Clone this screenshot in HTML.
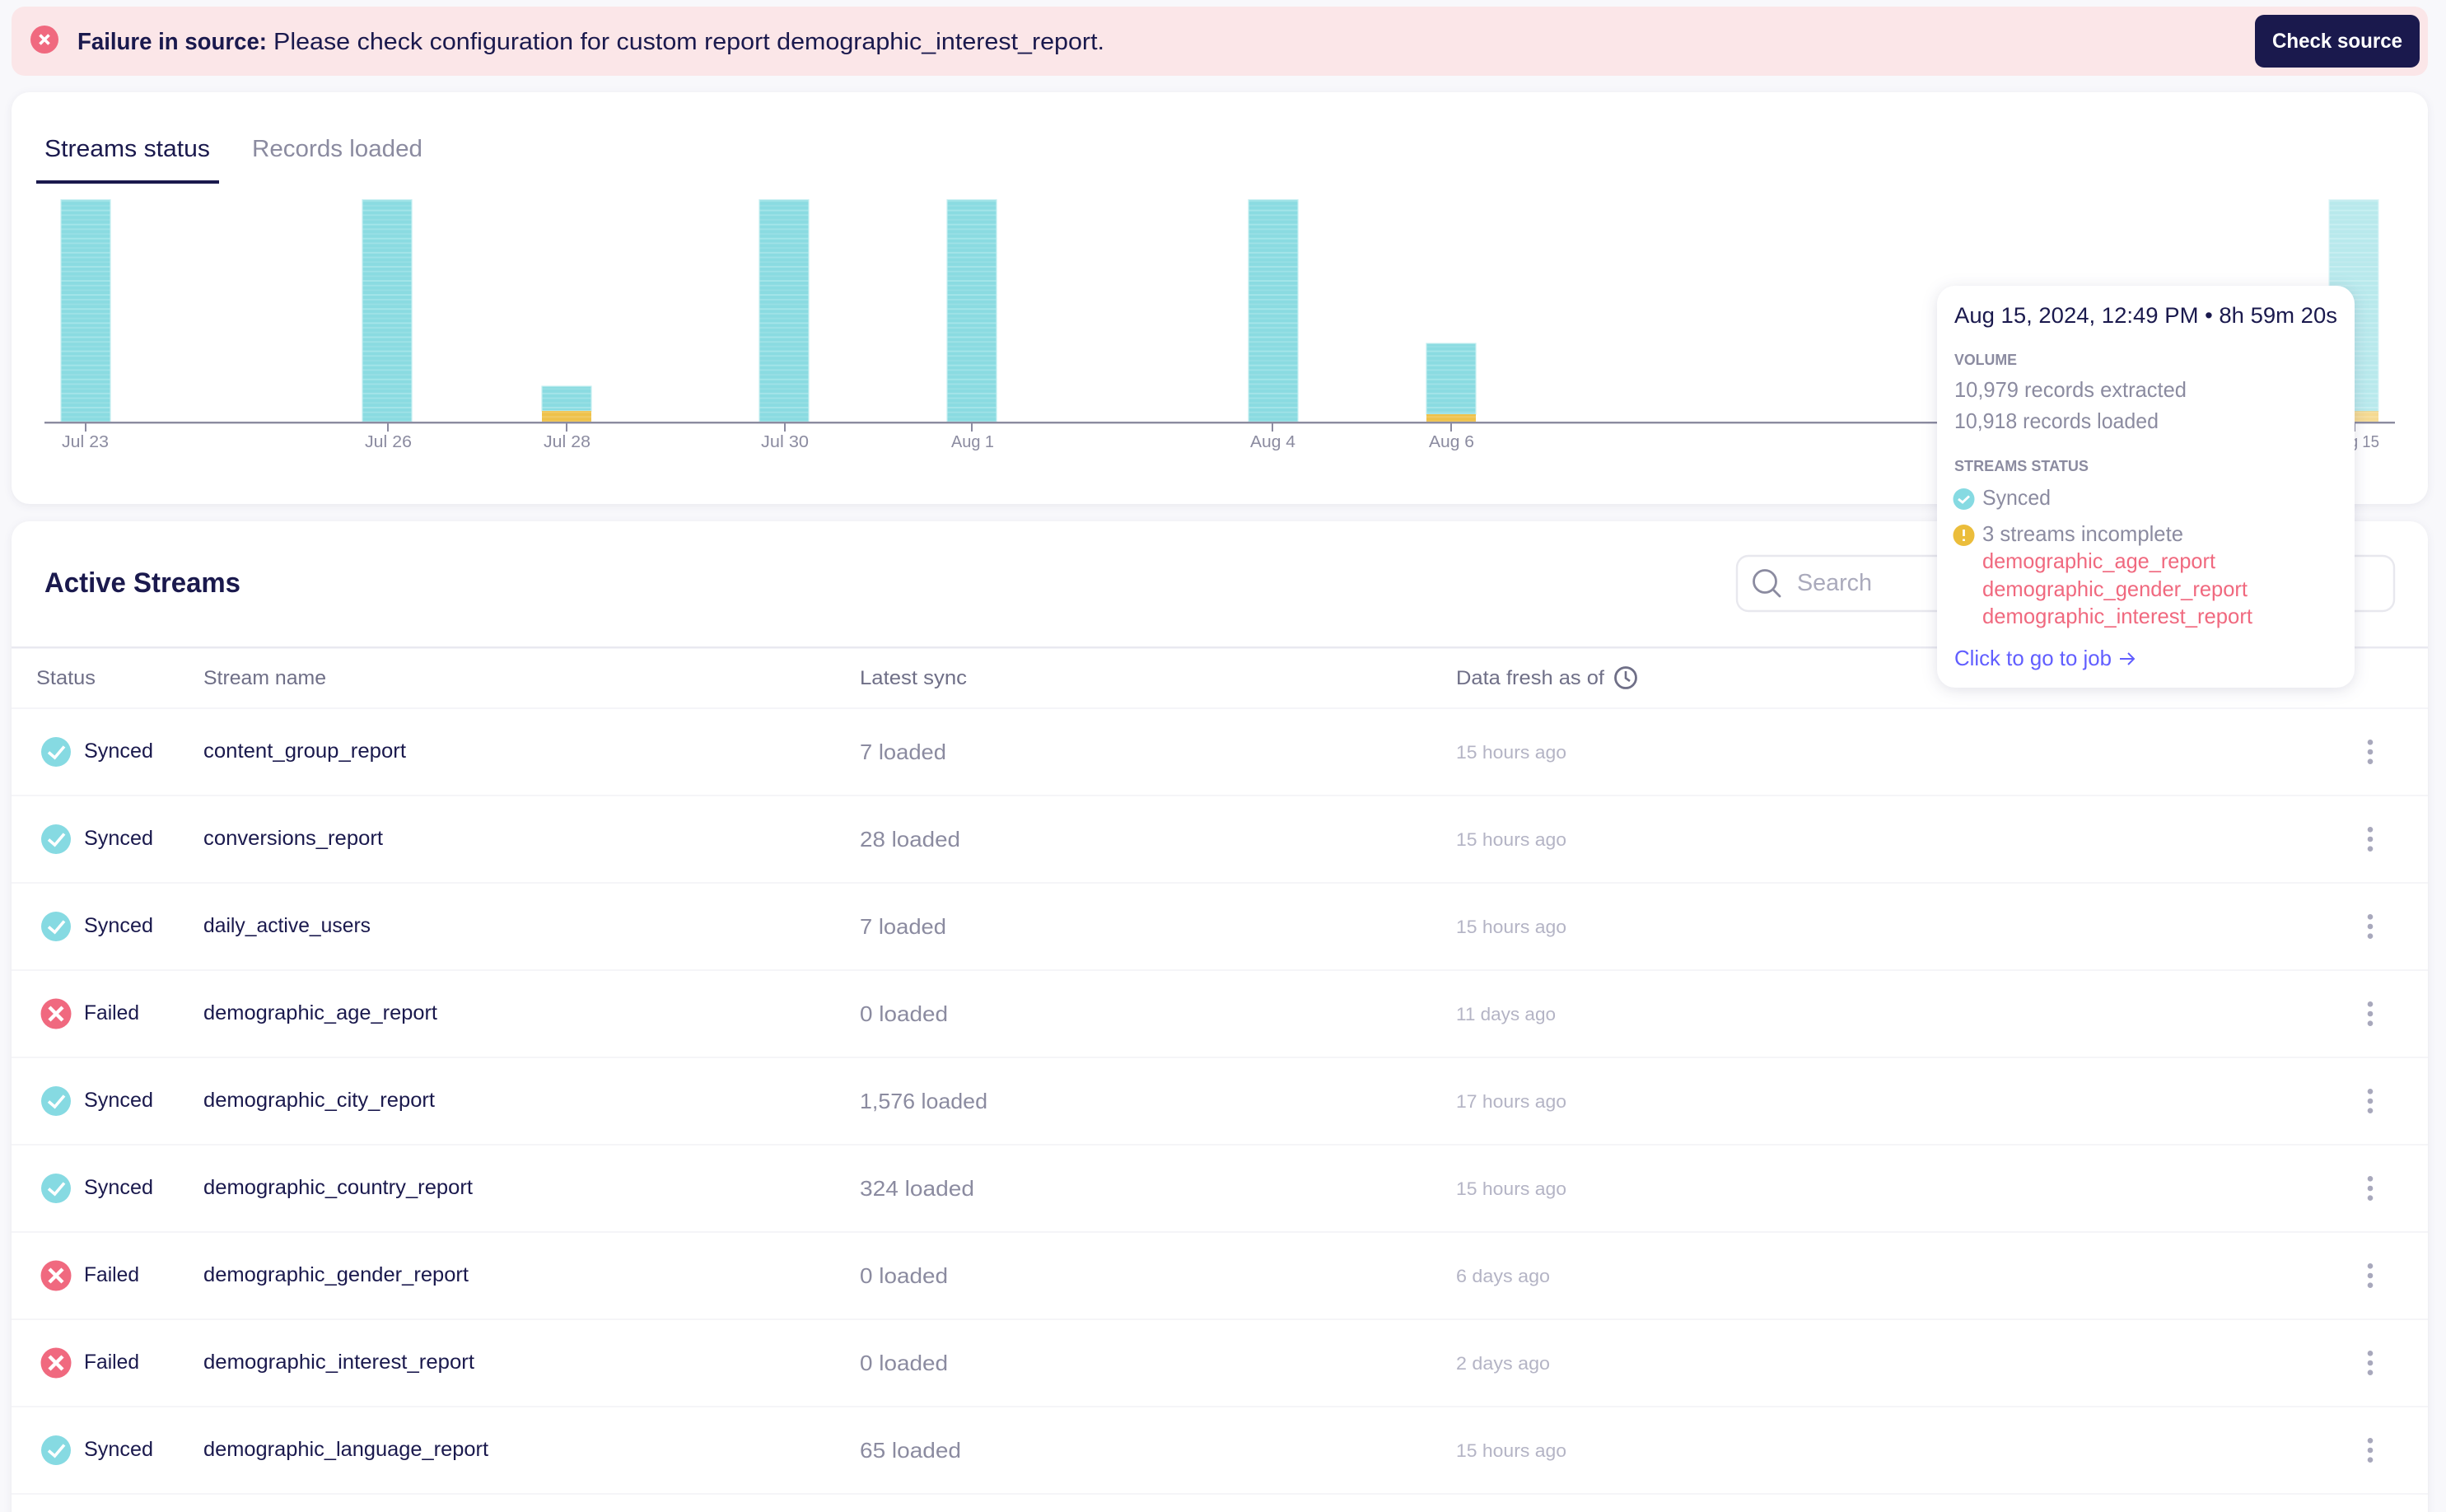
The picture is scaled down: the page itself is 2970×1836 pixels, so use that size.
<!DOCTYPE html>
<html lang="en">
<head>
<meta charset="utf-8">
<title>Streams status</title>
<style>
html,body{margin:0;padding:0;width:2970px;height:1836px;overflow:hidden;background:#f8f8fb}
svg{display:block}
text{font-family:"Liberation Sans",sans-serif;fill:#1a194d}
.card{fill:#fff;filter:drop-shadow(0 2px 5px rgba(26,25,77,.07))}
.tip{fill:#fff;filter:drop-shadow(0 3px 9px rgba(26,25,77,.13))}
.lbl{font-size:20.5px;fill:#8b8ba0}
.row{font-size:25px}
.sub{font-size:26px;fill:#8b8ba0}
.ago{font-size:22.5px;fill:#b4b4c5}
.th{font-size:24.5px;fill:#6f6f87}
.tt{font-size:26px;fill:#8b8ba0}
.cap{font-size:18px;font-weight:bold;fill:#8b8ba0}
.err{font-size:26px;fill:#f0697f}
.line{stroke:#f5f5f8;stroke-width:2}
.tick{stroke:#8b8ba0;stroke-width:2}
.dot{fill:#a8a8bc}
</style>
</head>
<body>
<svg width="2970" height="1836" viewBox="0 0 2970 1836" xmlns="http://www.w3.org/2000/svg">
<defs>
<pattern id="teal" width="6" height="17.100" patternUnits="userSpaceOnUse"><rect width="6" height="17.100" fill="#8adbe1"/><rect y="3.800" width="6" height="1.900" fill="#9fe2e7"/><rect y="9.500" width="6" height="1.900" fill="#97dfe4"/><rect y="15.200" width="6" height="1.900" fill="#a5e5e9"/></pattern>
<pattern id="gold" width="6" height="5.700" patternUnits="userSpaceOnUse"><rect width="6" height="5.700" fill="#eec14a"/><rect y="3.600" width="6" height="2.100" fill="#f1ca63"/></pattern>
<g id="ok"><ellipse rx="18" ry="18" fill="#86dae2"/><path d="M-9 .5L-1.500 7L10 -6.500" fill="none" stroke="#fff" stroke-width="3.600"/></g>
<g id="bad"><circle r="18.500" fill="#f0697f"/><path d="M-8 -8L8 8M8 -8L-8 8" fill="none" stroke="#fff" stroke-width="4.400"/></g>
<g id="more"><circle cy="-11.700" r="3.300" class="dot"/><circle r="3.300" class="dot"/><circle cy="11.700" r="3.300" class="dot"/></g>
</defs>

<!-- failure banner -->
<rect x="14" y="8" width="2934" height="84" rx="16" fill="#fbe6e8"/>
<circle cx="54" cy="48" r="17" fill="#f0697f"/>
<path d="M48.500 42.500L59.500 53.500M59.500 42.500L48.500 53.500" stroke="#fff" stroke-width="3.600" fill="none"/>
<text x="94" y="60" font-size="29" font-weight="bold" textLength="230" lengthAdjust="spacingAndGlyphs">Failure in source:</text>
<text x="332" y="60" font-size="29" textLength="1009" lengthAdjust="spacingAndGlyphs">Please check configuration for custom report demographic_interest_report.</text>
<rect x="2738" y="18" width="200" height="64" rx="11" fill="#1a194d"/>
<text x="2759" y="58" font-size="25" font-weight="bold" style="fill:#fff" textLength="158" lengthAdjust="spacingAndGlyphs">Check source</text>

<!-- chart card -->
<rect class="card" x="14" y="112" width="2934" height="500" rx="22"/>
<text x="54" y="190" font-size="29" textLength="201" lengthAdjust="spacingAndGlyphs">Streams status</text>
<text x="306" y="190" font-size="29" style="fill:#8b8ba0" textLength="207" lengthAdjust="spacingAndGlyphs">Records loaded</text>
<rect x="44" y="219" width="222" height="4" fill="#1a194d"/>

<g stroke="#c4eef1" stroke-width="1.200">
<rect x="74" y="242.500" width="60" height="270" fill="url(#teal)"/>
<rect x="440" y="242.500" width="60" height="270" fill="url(#teal)"/>
<rect x="658" y="469" width="60" height="30" fill="url(#teal)"/>
<rect x="922" y="242.500" width="60" height="270" fill="url(#teal)"/>
<rect x="1150" y="242.500" width="60" height="270" fill="url(#teal)"/>
<rect x="1516" y="242.500" width="60" height="270" fill="url(#teal)"/>
<rect x="1732" y="417" width="60" height="86" fill="url(#teal)"/>
<rect x="2828" y="242.500" width="60" height="257" fill="url(#teal)" opacity=".6"/>
</g>
<rect x="658" y="499" width="60" height="13" fill="url(#gold)"/>
<rect x="1732" y="503" width="60" height="9" fill="url(#gold)"/>
<rect x="2828" y="499" width="60" height="13" fill="url(#gold)" opacity=".6"/>
<rect x="54" y="512" width="2854" height="2.400" fill="#8b8ba0"/>
<path class="tick" d="M104 514V524M471 514V524M688 514V524M953 514V524M1180 514V524M1545 514V524M1762 514V524M2859 514V524"/>
<text class="lbl" x="75" y="543" textLength="57" lengthAdjust="spacingAndGlyphs">Jul 23</text>
<text class="lbl" x="443" y="543" textLength="57" lengthAdjust="spacingAndGlyphs">Jul 26</text>
<text class="lbl" x="660" y="543" textLength="57" lengthAdjust="spacingAndGlyphs">Jul 28</text>
<text class="lbl" x="924" y="543" textLength="58" lengthAdjust="spacingAndGlyphs">Jul 30</text>
<text class="lbl" x="1155" y="543" textLength="52" lengthAdjust="spacingAndGlyphs">Aug 1</text>
<text class="lbl" x="1518" y="543" textLength="55" lengthAdjust="spacingAndGlyphs">Aug 4</text>
<text class="lbl" x="1735" y="543" textLength="55" lengthAdjust="spacingAndGlyphs">Aug 6</text>
<text class="lbl" x="2830" y="543" textLength="59" lengthAdjust="spacingAndGlyphs">Aug 15</text>

<!-- active streams card -->
<rect class="card" x="14" y="633" width="2934" height="1260" rx="22"/>
<text x="54" y="719" font-size="34" font-weight="bold" textLength="238" lengthAdjust="spacingAndGlyphs">Active Streams</text>
<rect x="2109" y="675" width="798" height="67" rx="14" fill="#fff" stroke="#e8e8ee" stroke-width="2.400"/>
<circle cx="2143" cy="706" r="13.500" fill="none" stroke="#8b8ba0" stroke-width="2.800"/>
<path d="M2153 716L2161 724" stroke="#8b8ba0" stroke-width="2.800" fill="none" stroke-linecap="round"/>
<text x="2182" y="717" font-size="29" style="fill:#aaaabc" textLength="91" lengthAdjust="spacingAndGlyphs">Search</text>
<rect x="14" y="785" width="2934" height="2.500" fill="#e9e9f0"/>

<text class="th" x="44" y="831" textLength="72" lengthAdjust="spacingAndGlyphs">Status</text>
<text class="th" x="247" y="831" textLength="149" lengthAdjust="spacingAndGlyphs">Stream name</text>
<text class="th" x="1044" y="831" textLength="130" lengthAdjust="spacingAndGlyphs">Latest sync</text>
<text class="th" x="1768" y="831" textLength="180" lengthAdjust="spacingAndGlyphs">Data fresh as of</text>
<circle cx="1974" cy="823" r="12.500" fill="none" stroke="#6f6f87" stroke-width="2.800"/>
<path d="M1974 815V823.500L1979 827" fill="none" stroke="#6f6f87" stroke-width="2.600"/>

<path class="line" d="M14 860H2948M14 966H2948M14 1072H2948M14 1178H2948M14 1284H2948M14 1390H2948M14 1496H2948M14 1602H2948M14 1708H2948M14 1814H2948"/>

<!-- rows -->
<use href="#ok" x="68" y="913"/><text class="row" x="102" y="920" textLength="84" lengthAdjust="spacingAndGlyphs">Synced</text>
<text class="row" x="247" y="920" textLength="246" lengthAdjust="spacingAndGlyphs">content_group_report</text>
<text class="sub" x="1044" y="922" textLength="105" lengthAdjust="spacingAndGlyphs">7 loaded</text>
<text class="ago" x="1768" y="921" textLength="134" lengthAdjust="spacingAndGlyphs">15 hours ago</text>
<use href="#more" x="2878" y="913"/>

<use href="#ok" x="68" y="1019"/><text class="row" x="102" y="1026" textLength="84" lengthAdjust="spacingAndGlyphs">Synced</text>
<text class="row" x="247" y="1026" textLength="218" lengthAdjust="spacingAndGlyphs">conversions_report</text>
<text class="sub" x="1044" y="1028" textLength="122" lengthAdjust="spacingAndGlyphs">28 loaded</text>
<text class="ago" x="1768" y="1027" textLength="134" lengthAdjust="spacingAndGlyphs">15 hours ago</text>
<use href="#more" x="2878" y="1019"/>

<use href="#ok" x="68" y="1125"/><text class="row" x="102" y="1132" textLength="84" lengthAdjust="spacingAndGlyphs">Synced</text>
<text class="row" x="247" y="1132" textLength="203" lengthAdjust="spacingAndGlyphs">daily_active_users</text>
<text class="sub" x="1044" y="1134" textLength="105" lengthAdjust="spacingAndGlyphs">7 loaded</text>
<text class="ago" x="1768" y="1133" textLength="134" lengthAdjust="spacingAndGlyphs">15 hours ago</text>
<use href="#more" x="2878" y="1125"/>

<use href="#bad" x="68" y="1231"/><text class="row" x="102" y="1238" textLength="67" lengthAdjust="spacingAndGlyphs">Failed</text>
<text class="row" x="247" y="1238" textLength="284" lengthAdjust="spacingAndGlyphs">demographic_age_report</text>
<text class="sub" x="1044" y="1240" textLength="107" lengthAdjust="spacingAndGlyphs">0 loaded</text>
<text class="ago" x="1768" y="1239" textLength="121" lengthAdjust="spacingAndGlyphs">11 days ago</text>
<use href="#more" x="2878" y="1231"/>

<use href="#ok" x="68" y="1337"/><text class="row" x="102" y="1344" textLength="84" lengthAdjust="spacingAndGlyphs">Synced</text>
<text class="row" x="247" y="1344" textLength="281" lengthAdjust="spacingAndGlyphs">demographic_city_report</text>
<text class="sub" x="1044" y="1346" textLength="155" lengthAdjust="spacingAndGlyphs">1,576 loaded</text>
<text class="ago" x="1768" y="1345" textLength="134" lengthAdjust="spacingAndGlyphs">17 hours ago</text>
<use href="#more" x="2878" y="1337"/>

<use href="#ok" x="68" y="1443"/><text class="row" x="102" y="1450" textLength="84" lengthAdjust="spacingAndGlyphs">Synced</text>
<text class="row" x="247" y="1450" textLength="327" lengthAdjust="spacingAndGlyphs">demographic_country_report</text>
<text class="sub" x="1044" y="1452" textLength="139" lengthAdjust="spacingAndGlyphs">324 loaded</text>
<text class="ago" x="1768" y="1451" textLength="134" lengthAdjust="spacingAndGlyphs">15 hours ago</text>
<use href="#more" x="2878" y="1443"/>

<use href="#bad" x="68" y="1549"/><text class="row" x="102" y="1556" textLength="67" lengthAdjust="spacingAndGlyphs">Failed</text>
<text class="row" x="247" y="1556" textLength="322" lengthAdjust="spacingAndGlyphs">demographic_gender_report</text>
<text class="sub" x="1044" y="1558" textLength="107" lengthAdjust="spacingAndGlyphs">0 loaded</text>
<text class="ago" x="1768" y="1557" textLength="114" lengthAdjust="spacingAndGlyphs">6 days ago</text>
<use href="#more" x="2878" y="1549"/>

<use href="#bad" x="68" y="1655"/><text class="row" x="102" y="1662" textLength="67" lengthAdjust="spacingAndGlyphs">Failed</text>
<text class="row" x="247" y="1662" textLength="329" lengthAdjust="spacingAndGlyphs">demographic_interest_report</text>
<text class="sub" x="1044" y="1664" textLength="107" lengthAdjust="spacingAndGlyphs">0 loaded</text>
<text class="ago" x="1768" y="1663" textLength="114" lengthAdjust="spacingAndGlyphs">2 days ago</text>
<use href="#more" x="2878" y="1655"/>

<use href="#ok" x="68" y="1761"/><text class="row" x="102" y="1768" textLength="84" lengthAdjust="spacingAndGlyphs">Synced</text>
<text class="row" x="247" y="1768" textLength="346" lengthAdjust="spacingAndGlyphs">demographic_language_report</text>
<text class="sub" x="1044" y="1770" textLength="123" lengthAdjust="spacingAndGlyphs">65 loaded</text>
<text class="ago" x="1768" y="1769" textLength="134" lengthAdjust="spacingAndGlyphs">15 hours ago</text>
<use href="#more" x="2878" y="1761"/>

<!-- tooltip -->
<rect class="tip" x="2352" y="347" width="507" height="488" rx="22"/>
<text x="2373" y="392" font-size="27" textLength="465" lengthAdjust="spacingAndGlyphs">Aug 15, 2024, 12:49 PM • 8h 59m 20s</text>
<text class="cap" x="2373" y="443" textLength="76" lengthAdjust="spacingAndGlyphs">VOLUME</text>
<text class="tt" x="2373" y="482" textLength="282" lengthAdjust="spacingAndGlyphs">10,979 records extracted</text>
<text class="tt" x="2373" y="520" textLength="248" lengthAdjust="spacingAndGlyphs">10,918 records loaded</text>
<text class="cap" x="2373" y="572" textLength="163" lengthAdjust="spacingAndGlyphs">STREAMS STATUS</text>
<circle cx="2384.500" cy="606" r="13" fill="#86dae2"/>
<path d="M2378 606L2383 610L2391 602.500" fill="none" stroke="#fff" stroke-width="2.800"/>
<text class="tt" x="2407" y="613" textLength="83" lengthAdjust="spacingAndGlyphs">Synced</text>
<circle cx="2384.500" cy="650" r="13" fill="#ebbd3b"/>
<path d="M2384.500 643V651M2384.500 654.500V657" stroke="#fff" stroke-width="2.800" fill="none"/>
<text class="tt" x="2407" y="657" textLength="244" lengthAdjust="spacingAndGlyphs">3 streams incomplete</text>
<text class="err" x="2407" y="690" textLength="283" lengthAdjust="spacingAndGlyphs">demographic_age_report</text>
<text class="err" x="2407" y="724" textLength="322" lengthAdjust="spacingAndGlyphs">demographic_gender_report</text>
<text class="err" x="2407" y="757" textLength="328" lengthAdjust="spacingAndGlyphs">demographic_interest_report</text>
<text x="2373" y="808" font-size="26" style="fill:#615eff" textLength="191" lengthAdjust="spacingAndGlyphs">Click to go to job</text>
<path d="M2574 800H2591M2584 793L2591 800L2584 807" fill="none" stroke="#615eff" stroke-width="2"/>
</svg>
</body>
</html>
